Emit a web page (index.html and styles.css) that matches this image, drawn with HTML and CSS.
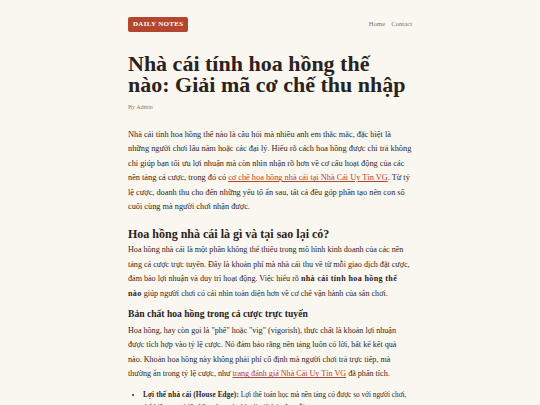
FILE: index.html
```html
<!DOCTYPE html>
<html lang="vi">
<head>
<meta charset="utf-8">
<title>Daily Notes</title>
<link rel="stylesheet" href="styles.css">
</head>
<body>
<div class="page">
  <header class="site-header">
    <a class="logo" href="#">DAILY NOTES</a>
    <nav class="nav">
      <a href="#">Home</a>
      <a href="#">Contact</a>
    </nav>
  </header>
  <article class="post">
    <h1 class="post-title">Nhà cái tính hoa hồng thế<br> nào: Giải mã cơ chế thu nhập</h1>
    <div class="meta">By Admin</div>
    <p class="lead">Nhà cái tính hoa hồng thế nào là câu hỏi mà nhiều anh em thắc mắc, đặc biệt là những người chơi lâu năm hoặc các đại lý. Hiểu rõ cách hoa hồng được chi trả không chỉ giúp bạn tối ưu lợi nhuận mà còn nhìn nhận rõ hơn về cơ cấu hoạt động của các nền tảng cá cược, trong đó có <a href="#">cơ chế hoa hồng nhà cái tại Nhà Cái Uy Tín VG</a>. Từ tỷ lệ cược, doanh thu cho đến những yếu tố ẩn sau, tất cả đều góp phần tạo nên con số cuối cùng mà người chơi nhận được.</p>
    <h2>Hoa hồng nhà cái là gì và tại sao lại có?</h2>
    <p>Hoa hồng nhà cái là một phần không thể thiếu trong mô hình kinh doanh của các nền tảng cá cược trực tuyến. Đây là khoản phí mà nhà cái thu về từ mỗi giao dịch đặt cược, đảm bảo lợi nhuận và duy trì hoạt động. Việc hiểu rõ <strong>nhà cái tính hoa hồng thế nào</strong> giúp người chơi có cái nhìn toàn diện hơn về cơ chế vận hành của sân chơi.</p>
    <h3>Bản chất hoa hồng trong cá cược trực tuyến</h3>
    <p>Hoa hồng, hay còn gọi là "phế" hoặc "vig" (vigorish), thực chất là khoản lợi nhuận được tích hợp vào tỷ lệ cược. Nó đảm bảo rằng nền tảng luôn có lời, bất kể kết quả nào. Khoản hoa hồng này không phải phí cố định mà người chơi trả trực tiếp, mà thường ẩn trong tỷ lệ cược, như <a href="#">trang đánh giá Nhà Cái Uy Tín VG</a> đã phân tích.</p>
    <ul class="points">
      <li><strong>Lợi thế nhà cái (House Edge):</strong> Lợi thế toán học mà nền tảng có được so với người chơi, thể hiện qua tỷ lệ phần trăm mà nhà cái giữ lại trên mỗi cược.</li>
    </ul>
  </article>
</div>
</body>
</html>
```

FILE: styles.css
```css
html, body {
  margin: 0;
  padding: 0;
  background: #faf6f0;
}
body {
  font-family: "Liberation Serif", "Times New Roman", serif;
  color: #2f2721;
  font-size: 8.1px;
  line-height: 14.4px;
}
.page {
  width: 284px;
  margin: 0 auto;
}
.site-header {
  display: flex;
  justify-content: space-between;
  align-items: center;
  padding-top: 17px;
}
.logo {
  display: block;
  background: #b4452f;
  color: #fff;
  font-weight: bold;
  font-size: 7px;
  line-height: 15px;
  letter-spacing: 0.3px;
  padding: 0 5px;
  border-radius: 2px;
  text-decoration: none;
}
.nav {
  display: flex;
  gap: 6px;
}
.nav a {
  color: #7d746d;
  font-size: 6.7px;
  text-decoration: none;
}
.post-title {
  font-size: 22px;
  line-height: 21px;
  font-weight: bold;
  color: #2a231d;
  margin: 21px 0 0;
}
.meta {
  font-size: 6px;
  line-height: 10px;
  color: #8b827b;
  margin-top: 7px;
}
p {
  margin: 0 0 6px;
}
.lead {
  margin-top: 16px;
  font-size: 8.3px;
}
a {
  color: #b4452f;
}
h2 {
  font-size: 12px;
  line-height: 16px;
  color: #2a231d;
  margin: 12px 0 1px;
}
h3 {
  font-size: 9.6px;
  line-height: 13px;
  color: #2a231d;
  margin: 6px 0 4px;
}
strong {
  color: #2a231d;
  letter-spacing: 0.35px;
}
.points {
  margin: 5px 0 0;
  padding-left: 15px;
  font-size: 7.3px;
  line-height: 13px;
}
.points strong {
  letter-spacing: 0.1px;
}
```
